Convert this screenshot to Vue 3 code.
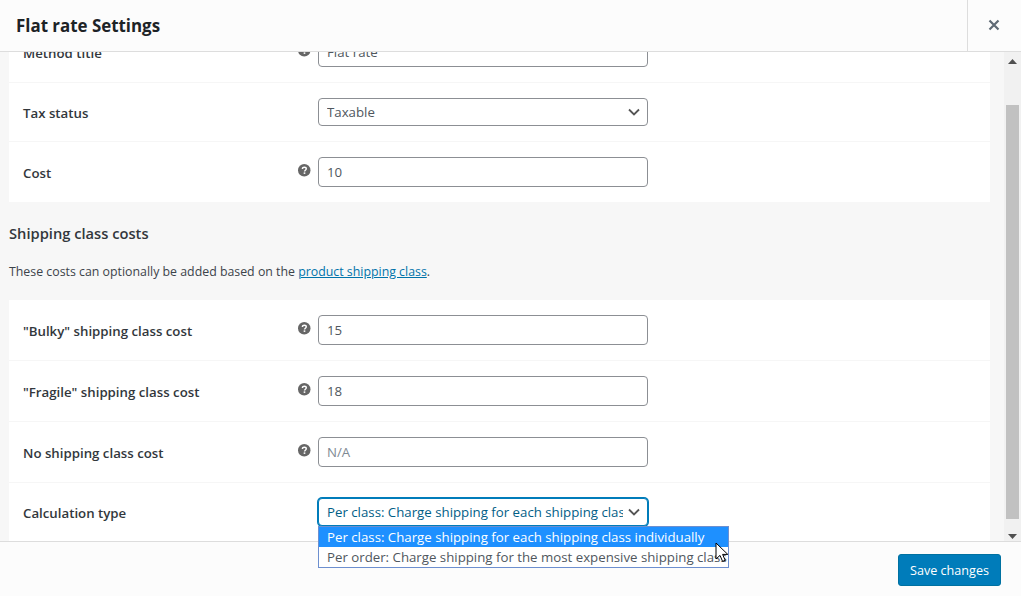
<script setup>
const topRows = [
  { label: 'Method title', help: true, type: 'input', value: 'Flat rate' },
  { label: 'Tax status', help: false, type: 'select', value: 'Taxable' },
  { label: 'Cost', help: true, type: 'input', value: '10' }
]
const classRows = [
  { label: '"Bulky" shipping class cost', help: true, type: 'input', value: '15' },
  { label: '"Fragile" shipping class cost', help: true, type: 'input', value: '18' },
  { label: 'No shipping class cost', help: true, type: 'input', value: '', placeholder: 'N/A' }
]
</script>

<template>
  <div class="modal">
    <header class="head">
      <h1 class="title">Flat rate Settings</h1>
      <button class="close" aria-label="Close">
        <svg width="12" height="12" viewBox="0 0 12 12"><path d="M1.5 1.5l9 9M10.5 1.5l-9 9" stroke="#5f6a75" stroke-width="2.2" fill="none"/></svg>
      </button>
    </header>

    <main class="body">
      <div class="content">
        <section class="card first">
          <div v-for="r in topRows" :key="r.label" class="row">
            <span class="label">{{ r.label }}</span>
            <span class="help-slot">
              <svg v-if="r.help" class="help" width="12.5" height="12.5" viewBox="0 0 13 13"><circle cx="6.5" cy="6.5" r="6.5" fill="#666"/><path d="M4.6 5.1c0-1.1.9-1.8 2-1.8s2 .7 2 1.7c0 1.5-1.8 1.5-1.8 2.8" stroke="#fff" stroke-width="1.5" fill="none"/><rect x="5.9" y="8.7" width="1.7" height="1.6" fill="#fff"/></svg>
            </span>
            <div v-if="r.type === 'input'" class="field">{{ r.value }}</div>
            <div v-else class="field sel">
              <span class="sel-text">{{ r.value }}</span>
              <svg class="chev" width="12" height="8" viewBox="0 0 12 8"><path d="M1 1.5l5 5 5-5" stroke="#555" stroke-width="1.8" fill="none"/></svg>
            </div>
          </div>
        </section>

        <h2 class="section">Shipping class costs</h2>
        <p class="desc">These costs can optionally be added based on the <a class="link">product shipping class</a>.</p>

        <section class="card">
          <div v-for="r in classRows" :key="r.label" class="row">
            <span class="label">{{ r.label }}</span>
            <span class="help-slot">
              <svg class="help" width="12.5" height="12.5" viewBox="0 0 13 13"><circle cx="6.5" cy="6.5" r="6.5" fill="#666"/><path d="M4.6 5.1c0-1.1.9-1.8 2-1.8s2 .7 2 1.7c0 1.5-1.8 1.5-1.8 2.8" stroke="#fff" stroke-width="1.5" fill="none"/><rect x="5.9" y="8.7" width="1.7" height="1.6" fill="#fff"/></svg>
            </span>
            <div class="field" :class="{ ph: !r.value }">{{ r.value || r.placeholder }}</div>
          </div>
          <div class="row">
            <span class="label">Calculation type</span>
            <span class="help-slot"></span>
            <div class="field sel focus">
              <span class="sel-text">Per class: Charge shipping for each shipping class individually</span>
              <svg class="chev" width="12" height="8" viewBox="0 0 12 8"><path d="M1 1.5l5 5 5-5" stroke="#555" stroke-width="1.8" fill="none"/></svg>
            </div>
          </div>
        </section>
      </div>

      <div class="scrollbar">
        <svg width="9" height="5" viewBox="0 0 9 5"><path d="M4.5 0L9 5H0z" fill="#505050"/></svg>
        <div class="thumb"></div>
        <svg width="9" height="5" viewBox="0 0 9 5"><path d="M0 0h9L4.5 5z" fill="#505050"/></svg>
      </div>
    </main>

    <footer class="foot">
      <button class="save">Save changes</button>
    </footer>

    <ul class="menu">
      <li class="opt on">Per class: Charge shipping for each shipping class individually</li>
      <li class="opt">Per order: Charge shipping for the most expensive shipping class</li>
    </ul>
    <svg class="cursor" width="14" height="22" viewBox="0 0 14 22"><path d="M1 1v16l4-3.6 2.6 6 2.6-1.1-2.6-5.9h5.2z" fill="#fff" stroke="#000" stroke-width="1"/></svg>
  </div>
</template>

<style>
html, body { margin: 0; overflow: hidden; }
</style>

<style scoped>
.modal {
  width: 1021px;
  height: 596px;
  display: flex;
  flex-direction: column;
  position: relative;
  font-family: "Open Sans", "Noto Sans", sans-serif;
  font-size: 13.2px;
  color: #2c3338;
  background: #f7f7f7;
  overflow: hidden;
}
.head {
  height: 51px;
  flex: none;
  display: flex;
  align-items: stretch;
  justify-content: space-between;
  background: #fcfcfc;
  border-bottom: 1px solid #dddddd;
  position: relative;
  z-index: 2;
}
.title {
  margin: 0 0 0 16px;
  font-size: 16.9px;
  line-height: 51px;
  font-weight: 700;
  color: #1d2327;
}
.close {
  width: 54px;
  border: 0;
  border-left: 1px solid #dddddd;
  background: transparent;
  padding: 0 2px 2px 0;
  display: flex;
  align-items: center;
  justify-content: center;
}
.body {
  flex: 1;
  min-height: 0;
  display: flex;
  overflow: hidden;
}
.content {
  flex: 1;
  min-width: 0;
  padding: 0 14px 0 9px;
}
.card { background: #fff; }
.card.first { margin-top: -30px; }
.row {
  display: flex;
  align-items: center;
  padding: 15px 0 15px 14px;
  border-bottom: 1px solid #f6f6f6;
}
.row:last-child { border-bottom: 0; }
.label {
  width: 275px;
  flex: none;
  padding-top: 2px;
  font-weight: 600;
  font-size: 13.25px;
  color: #32373c;
}
.help-slot {
  width: 20px;
  height: 30px;
  flex: none;
  display: flex;
  align-items: center;
  margin-top: -3px;
}
.help { display: block; }
.field {
  width: 330px;
  height: 30px;
  box-sizing: border-box;
  border: 1px solid #8c8f94;
  border-radius: 4px;
  background: #fff;
  padding: 0 8px;
  line-height: 28px;
  color: #50575e;
  font-size: 13.25px;
}
.field.ph { color: #7e8993; }
.field.sel {
  height: 28px;
  line-height: 26px;
  display: flex;
  align-items: center;
  padding-right: 7px;
}
.sel-text {
  flex: 1;
  min-width: 0;
  margin-right: 5px;
  white-space: nowrap;
  overflow: hidden;
}
.chev { flex: none; }
.field.focus {
  border-color: #007cba;
  box-shadow: 0 0 0 1px #007cba;
  color: #016087;
}
.menu {
  position: absolute;
  left: 318px;
  top: 526px;
  z-index: 5;
  width: 411px;
  box-sizing: border-box;
  margin: 0;
  padding: 0;
  list-style: none;
  background: #fff;
  border: 1px solid #6d8fcf;
  font-size: 13.25px;
}
.opt {
  height: 20px;
  line-height: 20px;
  padding-left: 8px;
  white-space: nowrap;
  overflow: hidden;
  color: #50575e;
}
.opt.on { background: #1e90ff; color: #fff; }
.cursor {
  position: absolute;
  left: 715px;
  top: 542px;
  z-index: 6;
}
.section {
  margin: 0;
  padding-top: 21px;
  font-size: 14.7px;
  line-height: 20px;
  font-weight: 600;
  color: #32373c;
}
.desc {
  margin: 0;
  padding: 19px 0 18px;
  font-size: 12.35px;
  line-height: 20px;
  color: #3c434a;
}
.link { color: #0073aa; text-decoration: underline; }
.scrollbar {
  width: 17px;
  flex: none;
  background: #f1f1f1;
  display: flex;
  flex-direction: column;
  align-items: center;
  padding-top: 7px;
  box-sizing: border-box;
}
.thumb {
  width: 13px;
  height: 414px;
  margin: 41px 0 15px;
  background: #c1c1c1;
}
.foot {
  height: 55px;
  flex: none;
  box-sizing: border-box;
  background: #fcfcfc;
  border-top: 1px solid #dddddd;
  display: flex;
  align-items: flex-start;
  justify-content: flex-end;
  padding: 12px 20px 0 0;
}
.save {
  width: 103px;
  height: 32px;
  border: 1px solid #0071a1;
  border-radius: 3px;
  background: #007cba;
  color: #fff;
  font: 12.6px "Open Sans", "Noto Sans", sans-serif;
  padding: 0;
}
</style>
